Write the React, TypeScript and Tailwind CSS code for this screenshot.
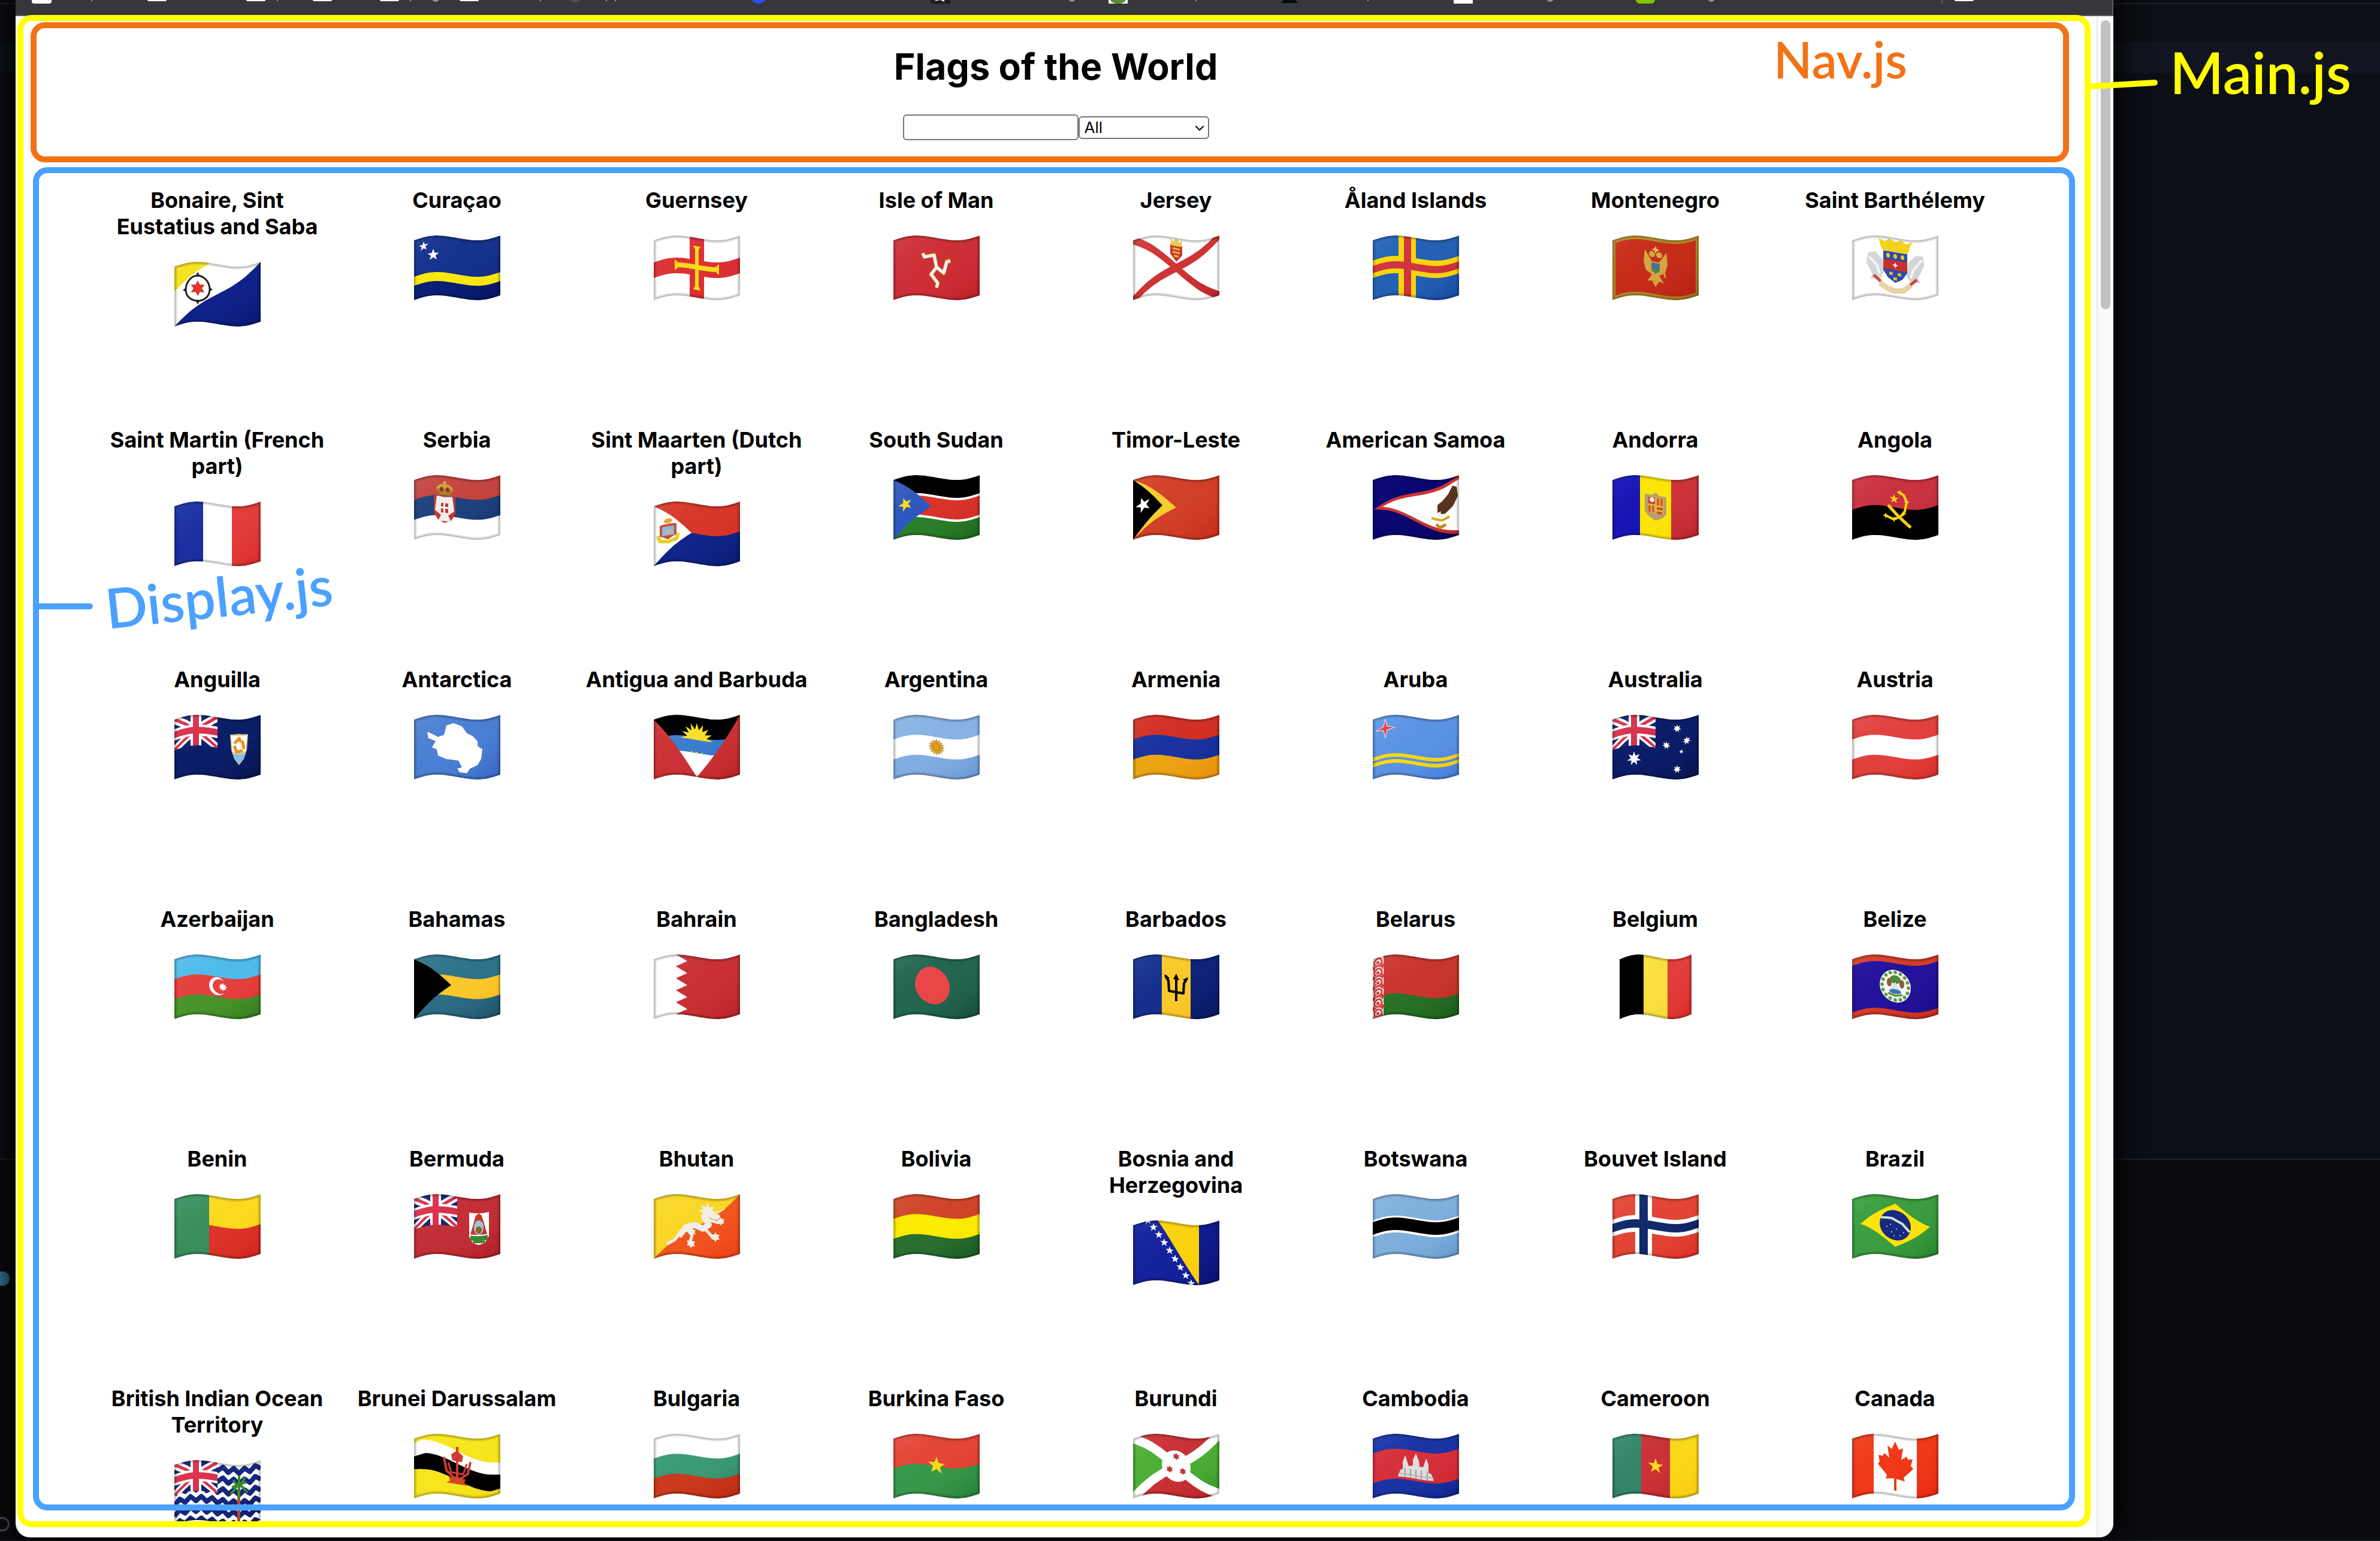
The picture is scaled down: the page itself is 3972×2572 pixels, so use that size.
import { useId } from "react";
import { ChevronDown } from "lucide-react";

/* ---------- flag drawing helpers ---------- */

type Pt = [number, number];
type Shape = { pts: Pt[]; fill: string; line?: number; closed?: boolean };

const H = 100;

// Height of the ripple at a given horizontal position (0..1).
function ripple(t: number) {
  const x = t * 144;
  if (x <= 37) return 8 - 8 * Math.sin(((Math.PI / 2) * Math.max(x, 0)) / 37);
  if (x <= 107) return 4 - 4 * Math.cos((Math.PI * (x - 37)) / 70);
  return 8 * Math.cos(((Math.PI / 2) * (Math.min(x, 144) - 107)) / 37);
}

function toPath(pts: Pt[], w: number, closed: boolean) {
  const out: string[] = [];
  const n = closed ? pts.length : pts.length - 1;
  const put = (x: number, y: number) =>
    out.push(`${x.toFixed(1)} ${(y + ripple(x / w)).toFixed(1)}`);
  put(pts[0][0], pts[0][1]);
  for (let i = 0; i < n; i++) {
    const [ax, ay] = pts[i];
    const [bx, by] = pts[(i + 1) % pts.length];
    const steps = Math.max(1, Math.ceil(Math.abs(bx - ax) / 5));
    for (let s = 1; s <= steps; s++)
      put(ax + ((bx - ax) * s) / steps, ay + ((by - ay) * s) / steps);
  }
  return "M" + out.join("L") + (closed ? "Z" : "");
}

const poly = (fill: string, ...pts: Pt[]): Shape => ({ pts, fill, closed: true });
const rect = (x: number, y: number, w: number, h: number, fill: string): Shape =>
  poly(fill, [x, y], [x + w, y], [x + w, y + h], [x, y + h]);
const line = (fill: string, width: number, ...pts: Pt[]): Shape => ({ pts, fill, line: width });
const ring = (cx: number, cy: number, rx: number, ry: number): Pt[] =>
  Array.from({ length: 32 }, (_, i) => {
    const a = (i / 32) * Math.PI * 2;
    return [cx + rx * Math.cos(a), cy + ry * Math.sin(a)] as Pt;
  });
const oval = (cx: number, cy: number, rx: number, ry: number, fill: string): Shape => ({
  pts: ring(cx, cy, rx, ry), fill, closed: true,
});
const hoop = (cx: number, cy: number, rx: number, ry: number, width: number, fill: string): Shape => ({
  pts: ring(cx, cy, rx, ry), fill, line: width, closed: true,
});
const star = (cx: number, cy: number, r: number, fill: string, n = 5, inner = 0.4, turn = 0): Shape => ({
  pts: Array.from({ length: n * 2 }, (_, i) => {
    const a = (i / (n * 2)) * Math.PI * 2 - Math.PI / 2 + turn;
    const q = i % 2 ? r * inner : r;
    return [cx + q * Math.cos(a), cy + q * Math.sin(a)] as Pt;
  }),
  fill, closed: true,
});
const across = (...c: string[]): Shape[] =>
  c.map((f, i) => rect(0, (H / c.length) * i, 144, H / c.length + (i < c.length - 1 ? 1 : 0), f));
const down = (w: number, ...c: string[]): Shape[] =>
  c.map((f, i) => rect((w / c.length) * i, 0, w / c.length + (i < c.length - 1 ? 1 : 0), H, f));
const all = (f: string) => rect(0, 0, 144, H, f);

const bars = (w: number, h: number, a: number, b: number, f: string): Shape[] => [
  poly(f, [0, 0], [a, 0], [w, h - b], [w, h], [w - a, h], [0, b]),
  poly(f, [w, 0], [w - a, 0], [0, h - b], [0, h], [a, h], [w, b]),
];
const union = (blue = "#12246e"): Shape[] => [
  rect(0, 0, 72, 51, blue),
  ...bars(72, 51, 11, 8, "#fff"),
  ...bars(72, 51, 4, 3, "#d8304a"),
  rect(27, 0, 18, 51, "#fff"),
  rect(0, 16, 72, 19, "#fff"),
  rect(31, 0, 10, 51, "#d8304a"),
  rect(0, 20, 72, 11, "#d8304a"),
];
const cross = (f: string, x: number, w: number, y: number, h: number): Shape[] => [
  rect(x, 0, w, H, f),
  rect(0, y, 144, h, f),
];

/* ---------- flags ---------- */

const flags: Record<string, Shape[]> = {
  bonaire: [
    all("#fff"),
    poly("#f5e11c", [0, 0], [60, 0], [0, 42]),
    poly("#10228a", [144, 0], [144, 100], [0, 100]),
    hoop(39, 44, 20, 21, 3, "#1d1d1b"),
    poly("#1d1d1b", [35, 24], [39, 17], [43, 24]), poly("#1d1d1b", [35, 64], [39, 71], [43, 64]),
    poly("#1d1d1b", [20, 40], [14, 44], [20, 48]), poly("#1d1d1b", [58, 40], [64, 44], [58, 48]),
    star(39, 44, 13, "#dc352c", 6, 0.55),
  ],
  curacao: [
    all("#15328c"), rect(0, 76, 144, 24, "#0b1f78"), rect(0, 61, 144, 15, "#fae80c"),
    star(16, 15, 8, "#fff"), star(32, 32, 10, "#fff"),
  ],
  guernsey: [
    all("#fff"), ...cross("#dc3237", 60, 24, 37, 26),
    poly("#f8dc17", [66, 14], [78, 14], [75, 20], [75, 80], [78, 87], [66, 87], [69, 80], [69, 20]),
    poly("#f8dc17", [35, 40], [41, 45], [103, 45], [109, 40], [109, 58], [103, 53], [41, 53], [35, 58]),
  ],
  man: [
    all("#cc3036"),
    line("#d9b520", 6, [72, 49], [68, 29], [52, 35], [49, 29]),
    line("#d9b520", 6, [72, 49], [84, 57], [89, 36], [95, 35]),
    line("#d9b520", 6, [72, 49], [63, 63], [74, 75], [72, 83]),
    line("#f1f1f1", 5, [72, 49], [68, 30], [52, 35], [49, 29]),
    line("#f1f1f1", 5, [72, 49], [84, 56], [89, 38], [95, 35]),
    line("#f1f1f1", 5, [72, 49], [63, 62], [74, 75], [72, 83]),
  ],
  jersey: [
    all("#fff"),
    poly("#cd3436", [0, 0], [10, 0], [144, 93], [144, 100], [134, 100], [0, 7]),
    poly("#cd3436", [144, 0], [134, 0], [0, 93], [0, 100], [10, 100], [144, 7]),
    poly("#c9372c", [62, 12], [82, 12], [82, 28], [72, 40], [62, 28]),
    poly("#e8c94c", [62, 3], [67, 7], [72, 1], [77, 7], [82, 3], [80, 14], [64, 14]),
    rect(66, 17, 12, 3, "#e3bd35"), rect(66, 23, 12, 3, "#e3bd35"), rect(68, 29, 8, 3, "#e3bd35"),
  ],
  aland: [all("#2461b5"), ...cross("#fbd40b", 43, 29, 34, 29), ...cross("#d03440", 52, 12, 43, 12)],
  montenegro: [
    all("#b8932e"), rect(5, 6, 134, 88, "#c52c1a"),
    poly("#d3a640", [66, 40], [54, 22], [52, 42], [56, 56], [66, 62], [58, 74], [66, 72], [72, 82], [78, 72], [86, 74], [78, 62], [88, 56], [92, 42], [90, 22], [78, 40]),
    oval(66, 28, 5, 5, "#d3a640"), oval(78, 28, 5, 5, "#d3a640"), star(72, 20, 7, "#e2bb50", 4),
    poly("#4a7191", [65, 42], [79, 42], [79, 54], [72, 60], [65, 54]), rect(66, 53, 12, 4, "#4f8a3c"),
    line("#c8a040", 3, [88, 64], [85, 48]),
  ],
  barthelemy: [
    all("#fff"),
    poly("#d3d6d9", [50, 38], [38, 26], [26, 28], [24, 44], [34, 64], [30, 72], [48, 70], [54, 58]),
    poly("#d3d6d9", [94, 38], [106, 26], [118, 28], [120, 44], [110, 64], [114, 72], [96, 70], [90, 58]),
    line("#f3f4f5", 4, [28, 34], [42, 50], [46, 64]), line("#f3f4f5", 4, [116, 34], [102, 50], [98, 64]),
    line("#cf4b3c", 5, [36, 66], [48, 76]), line("#cf4b3c", 5, [108, 66], [96, 76]),
    line("#ead5a8", 9, [46, 78], [58, 86], [72, 89], [86, 86], [98, 76]),
    poly("#2f4ba8", [52, 24], [92, 24], [92, 56], [84, 68], [72, 75], [60, 68], [52, 56]),
    rect(52, 38, 40, 16, "#c8302f"), star(72, 46, 5, "#fff", 4),
    poly("#f2d21b", [44, 4], [54, 8], [62, 3], [72, 7], [82, 3], [90, 8], [100, 4], [94, 20], [92, 24], [52, 24], [48, 18]),
    oval(60, 31, 3, 4, "#e8c92c"), oval(72, 31, 3, 4, "#e8c92c"), oval(84, 31, 3, 4, "#e8c92c"),
    rect(62, 58, 6, 5, "#d9bc38"), rect(76, 58, 6, 5, "#d9bc38"), rect(69, 66, 6, 5, "#d9bc38"),
  ],
  france: down(144, "#1b2ea0", "#fff", "#e23d3c"),
  serbia: [
    ...across("#c5443f", "#1d427d", "#fff"),
    poly("#c03a2e", [33, 34], [69, 34], [69, 62], [62, 74], [51, 79], [40, 74], [33, 62]),
    poly("#eee", [51, 36], [64, 34], [67, 58], [57, 66], [62, 76], [40, 76], [45, 66], [35, 58], [38, 34]),
    rect(45, 46, 12, 16, "#c03a2e"), rect(49, 46, 3, 16, "#fff"), rect(45, 52, 12, 3, "#fff"),
    oval(51, 22, 14, 8, "#d0a13a"), poly("#a87925", [38, 22], [64, 22], [60, 33], [42, 33]),
    oval(46, 23, 3, 4, "#8b2f2a"), oval(56, 23, 3, 4, "#8b2f2a"), oval(51, 12, 3, 3, "#d0a13a"),
  ],
  maarten: [
    ...across("#d63729", "#10258a"), poly("#fff", [0, 0], [63, 50], [0, 100]),
    line("#e9cf28", 6, [7, 52], [10, 62], [24, 66], [38, 62], [41, 52]),
    poly("#cb4a35", [10, 36], [38, 36], [38, 54], [24, 62], [10, 54]), rect(14, 40, 20, 15, "#86b8dd"),
    rect(19, 45, 10, 9, "#b9b6b2"), oval(24, 31, 7, 4, "#e6a637"),
  ],
  ssudan: [
    rect(0, 0, 144, 32, "#000"), rect(0, 30, 144, 40, "#fff"), rect(0, 34, 144, 32, "#d8342a"),
    rect(0, 70, 144, 30, "#2c7f2a"), poly("#2e57bd", [0, 0], [63, 50], [0, 100]),
    star(20, 47, 12, "#fbe011", 5, 0.4, -0.3),
  ],
  timor: [
    all("#d23f28"), poly("#f8cb2e", [0, 0], [72, 50], [0, 100]), poly("#000", [0, 0], [49, 50], [0, 100]),
    star(17, 47, 13, "#fff", 5, 0.4, -0.3),
  ],
  samoa: [
    all("#09066f"), poly("#cd3335", [2, 50], [144, 0], [144, 98]),
    poly("#fff", [16, 50], [144, 6], [144, 92]),
    poly("#5b3520", [133, 14], [140, 18], [142, 34], [134, 48], [120, 58], [108, 56], [108, 42], [116, 36], [126, 26]),
    poly("#f1efe6", [104, 56], [114, 53], [112, 62]),
    line("#dfaa28", 4, [98, 64], [116, 68], [128, 64]), line("#c99426", 5, [106, 74], [112, 80], [122, 76]),
  ],
  andorra: [
    rect(0, 0, 48, 100, "#1615b4"), rect(46, 0, 54, 100, "#fce508"), rect(98, 0, 46, 100, "#cd3439"),
    poly("#b6a06c", [54, 30], [66, 30], [72, 25], [78, 30], [90, 30], [90, 58], [84, 66], [72, 72], [60, 66], [54, 58]),
    rect(60, 34, 25, 26, "#e0b53c"),
    rect(60, 34, 11, 11, "#cb3a31"), rect(74, 34, 4, 12, "#d05c2d"), rect(80, 34, 4, 12, "#d05c2d"), rect(60, 48, 4, 11, "#d05c2d"),
    rect(66, 48, 4, 11, "#d05c2d"), rect(74, 49, 10, 4, "#c24b30"), rect(74, 56, 9, 4, "#c24b30"), oval(66, 38, 4, 4, "#f4f0e4"),
  ],
  angola: [
    ...across("#ca3141", "#000"),
    line("#fad40f", 4, [76, 23], [86, 27], [91, 38], [88, 54], [80, 65], [68, 70], [54, 65]),
    star(80, 24, 5, "#fad40f", 4), star(91, 38, 5, "#fad40f", 4), star(86, 58, 5, "#fad40f", 4), star(70, 70, 5, "#fad40f", 4), star(56, 66, 5, "#fad40f", 4),
    line("#fad40f", 5, [60, 48], [74, 61], [98, 80]), star(70, 36, 8, "#fad40f"),
  ],
  anguilla: [
    all("#0b1e68"), ...union(),
    poly("#d9d29b", [93, 26], [108, 24], [123, 26], [121, 52], [116, 66], [108, 76], [100, 66], [95, 52]),
    poly("#fff", [95, 28], [108, 27], [121, 28], [119, 54], [97, 54]), poly("#8cc4ee", [97, 58], [119, 58], [114, 67], [108, 73], [102, 67]),
    line("#f09422", 5, [104, 32], [114, 38], [116, 50]), line("#f09422", 5, [100, 44], [104, 54], [114, 52]), line("#f09422", 5, [110, 30], [100, 40]),
  ],
  antarctica: [
    all("#4b7fd3"),
    poly("#fff", [22, 27], [40, 37], [50, 33], [54, 17], [66, 11], [80, 14], [88, 24], [98, 28], [106, 36], [106, 44], [114, 50], [112, 66], [106, 76], [94, 82], [88, 91], [76, 91], [72, 86], [80, 82], [74, 72], [54, 73], [40, 68], [38, 58], [30, 54], [36, 44], [24, 38]),
  ],
  antigua: [
    rect(0, 0, 144, 38, "#000"), rect(0, 34, 144, 28, "#3b7ccd"), rect(0, 60, 144, 40, "#fff"),
    star(72, 37, 27, "#fbdf28", 16, 0.6), rect(28, 38, 90, 20, "#3b7ccd"),
    poly("#cb3235", [0, 0], [72, 100], [0, 100]), poly("#cb3235", [144, 0], [72, 100], [144, 100]),
  ],
  argentina: [...across("#87b2e3", "#fff", "#82ade0"), star(72, 50, 14, "#c79c52", 16, 0.7), oval(72, 50, 8, 9, "#dfa21c"), hoop(72, 50, 5, 6, 1, "#a9711d")],
  armenia: across("#d22f25", "#1a339f", "#eca413"),
  aruba: [
    all("#5b93e3"), rect(0, 64, 144, 6, "#f8d714"), rect(0, 74, 144, 6, "#f8d714"),
    star(21, 21, 17, "#fff", 4, 0.3), star(21, 21, 14, "#e2414b", 4, 0.28),
  ],
  australia: [
    all("#0b1d68"), ...union(), star(36, 73, 12, "#fff", 7, 0.45), star(108, 15, 7, "#fff", 7, 0.45), star(90, 44, 7, "#fff", 7, 0.45),
    star(124, 37, 7, "#fff", 7, 0.45), star(115, 54, 4, "#fff"), star(108, 83, 7, "#fff", 7, 0.45),
  ],
  austria: across("#e2413f", "#fff", "#e2413b"),
  azerbaijan: [
    ...across("#4ebbe9", "#e5403d", "#4a952b"), oval(72, 49, 14, 15, "#fff"), oval(76, 49, 12, 12, "#e5403d"), star(81, 49, 7, "#fff", 8, 0.6),
  ],
  bahamas: [...across("#2f7389", "#fbc82b", "#2d6c84"), poly("#000", [0, 0], [62, 49], [0, 100])],
  bahrain: [
    all("#fff"),
    poly("#c93136", [144, 0], [144, 100], [37, 100], [56, 90], [37, 80], [56, 70], [37, 60], [56, 50], [37, 40], [56, 30], [37, 20], [56, 10], [37, 0]),
  ],
  bangladesh: [all("#236650"), oval(65, 49, 29, 31, "#e9464a")],
  barbados: [
    ...down(144, "#15308c", "#fac92b", "#0e2278"),
    line("#000", 4, [72, 32], [72, 74]), poly("#000", [67, 38], [72, 28], [77, 38]),
    line("#000", 4, [54, 34], [59, 42], [60, 59], [84, 59], [85, 42], [90, 33]),
    poly("#000", [52, 32], [61, 37], [55, 41]), poly("#000", [92, 31], [83, 36], [89, 40]),
  ],
  belarus: [
    rect(0, 0, 144, 66, "#cb352f"), rect(0, 65, 144, 35, "#297227"), rect(0, 0, 18, 100, "#fff"),
    ...[0, 1, 2, 3, 4, 5].flatMap((i) => [
      hoop(9, 8 + i * 17, 6, 6, 3, "#cf3d3a"), rect(6, 6 + i * 17, 5, 5, "#cf3d3a"),
      star(2, 16 + i * 17, 6, "#cf3d3a", 4), star(16, 16 + i * 17, 6, "#cf3d3a", 4),
    ]),
  ],
  belgium: [rect(0, 0, 41, 100, "#000"), rect(40, 0, 41, 100, "#f9e03f"), rect(80, 0, 40, 100, "#e23e3b")],
  belize: [
    all("#23129c"), rect(0, 0, 144, 11, "#d43c27"), rect(0, 89, 144, 11, "#d43c27"),
    oval(72, 49, 26, 27, "#f4f6f0"),
    ...ring(72, 49, 22, 23).filter((_, i) => i % 2 === 0).map(([x, y]) => oval(x, y, 3, 3, "#5d9a45")),
    oval(72, 38, 9, 7, "#4f8a37"),
    oval(62, 44, 4, 7, "#8d5a3a"), oval(83, 44, 4, 7, "#8d5a3a"), poly("#d9e2ea", [72, 42], [82, 56], [62, 56]),
    oval(72, 58, 10, 4, "#3c79b4"), line("#5b8a2e", 3, [60, 62], [72, 65], [84, 62]),
  ],
  benin: [rect(56, 0, 88, 51, "#fada1e"), rect(56, 50, 88, 50, "#dc352c"), rect(0, 0, 58, 100, "#388f5c")],
  bermuda: [
    all("#c22f37"), ...union("#15246e"),
    poly("#fff", [92, 24], [125, 24], [125, 64], [118, 74], [108, 77], [98, 74], [92, 64]), rect(94, 62, 29, 8, "#3f8d35"),
    poly("#c9382f", [103, 28], [108, 24], [113, 28], [118, 46], [122, 60], [94, 60], [98, 46]),
    oval(108, 48, 8, 12, "#9cc6d8"), oval(108, 52, 5, 6, "#8e6528"), rect(98, 70, 20, 4, "#3f8d35"),
  ],
  bhutan: [
    all("#f9d726"), poly("#f1561f", [144, 0], [144, 100], [0, 100]),
    line("#f0eee8", 5, [22, 82], [34, 77], [44, 66]),
    line("#f0eee8", 10, [42, 70], [54, 54], [68, 48], [82, 52], [92, 44], [84, 32], [92, 24]),
    line("#f0eee8", 5, [54, 56], [64, 66], [60, 80]), line("#f0eee8", 5, [86, 52], [98, 64], [104, 62]), line("#f0eee8", 5, [92, 36], [110, 40]),
    star(62, 80, 8, "#f0eee8", 6, 0.6), star(103, 64, 8, "#f0eee8", 6, 0.6), star(112, 38, 7, "#f0eee8", 6, 0.6), star(90, 23, 15, "#f0eee8", 8, 0.55),
    oval(103, 30, 8, 5, "#f0eee8"), line("#f0eee8", 2, [100, 24], [118, 18]), star(64, 60, 7, "#f0eee8", 6, 0.6),
  ],
  bolivia: across("#cf4529", "#fbea03", "#297030"),
  bosnia: [
    all("#14229c"), rect(109, 0, 35, 100, "#101b8c"), poly("#fbd20d", [40, -2], [110, -2], [110, 100]),
    ...Array.from({ length: 9 }, (_, i) => star(25 + i * 9, -1 + i * 12.3, 7, "#fff")),
  ],
  botswana: [all("#7fafdb"), rect(0, 36, 144, 28, "#fff"), rect(0, 39, 144, 21, "#000")],
  bouvet: [all("#e34436"), ...cross("#fff", 38, 28, 35, 28), ...cross("#12296c", 45, 14, 42, 14)],
  brazil: [
    all("#3b9c40"), poly("#fde306", [14, 46], [72, 12], [130, 50], [72, 84]), oval(72, 48, 26, 25, "#172a80"),
    line("#cfe5d4", 4, [48, 38], [66, 37], [84, 44], [96, 56]),
    ...[[58, 52], [66, 60], [74, 54], [80, 64], [64, 48], [86, 58], [70, 66]].map(([x, y]) => oval(x, y, 1, 1, "#dbe4f3")),
  ],
  biot: [
    all("#fff"),
    ...[0, 1, 2, 3, 4, 5].map((i) =>
      line("#14297c", 8, ...Array.from({ length: 17 }, (_, k): Pt => [k * 9, 10 + i * 18 + (k % 2 ? -4 : 4)]))),
    ...union("#16256e"), rect(105, 40, 5, 60, "#b9532e"), oval(108, 70, 6, 5, "#cf4a2a"),
    line("#3b8a2f", 4, [94, 50], [108, 30], [122, 48]), line("#3b8a2f", 4, [96, 38], [108, 32], [120, 30]),
    line("#3b8a2f", 4, [108, 18], [108, 56]), line("#3b8a2f", 4, [98, 26], [108, 38], [118, 22]),
  ],
  brunei: [
    all("#f7e51d"), poly("#fff", [0, 8], [14, 6], [144, 48], [144, 72], [0, 32]), poly("#000", [0, 30], [20, 30], [144, 68], [144, 91], [128, 91], [0, 51]),
    line("#d13b33", 4, [72, 18], [72, 76]), poly("#d13b33", [62, 32], [72, 24], [82, 32], [80, 42], [64, 42]),
    line("#d13b33", 4, [50, 38], [54, 60], [66, 70], [78, 70], [90, 60], [94, 40]), line("#d13b33", 3, [57, 46], [62, 62], [82, 62], [88, 44]),
    poly("#d04a22", [58, 70], [86, 70], [84, 76], [90, 80], [54, 80], [60, 76]),
  ],
  bulgaria: across("#fff", "#3c9a75", "#cb3a1d"),
  burkina: [...across("#e34537", "#38984a"), star(72, 49, 15, "#fbd91d")],
  burundi: [
    all("#c93135"), poly("#4cae35", [0, 0], [72, 50], [0, 100]), poly("#4cae35", [144, 0], [72, 50], [144, 100]),
    line("#fff", 15, [-6, -4], [150, 104]), line("#fff", 15, [-6, 104], [150, -4]), oval(72, 50, 24, 26, "#fff"),
    star(72, 34, 6, "#b93a34", 6, 0.6), star(61, 57, 6, "#b93a34", 6, 0.6), star(83, 57, 6, "#b93a34", 6, 0.6),
  ],
  cambodia: [
    all("#1a33a5"), rect(0, 25, 144, 50, "#d6303a"),
    poly("#dedede", [42, 71], [46, 60], [50, 58], [50, 46], [54, 35], [58, 46], [60, 52], [67, 50], [67, 40], [72, 29], [77, 40], [78, 50], [84, 50], [86, 44], [89, 34], [93, 44], [93, 58], [98, 60], [102, 71]),
    ...[53, 62, 71, 80, 90].map((x) => rect(x, 56, 2, 14, "#9c9c9c")), rect(43, 65, 58, 2, "#b4b4b4"),
  ],
  cameroon: [...down(144, "#338468", "#ca3237", "#fad81a"), star(72, 50, 13, "#fbd91d")],
  canada: [
    all("#fff"), rect(0, 0, 36, 100, "#ef3919"), rect(108, 0, 36, 100, "#ef3919"),
    poly("#ef3919", [72, 9], [78, 22], [85, 18], [82, 38], [91, 31], [93, 36], [101, 35], [98, 46], [102, 51], [86, 67], [88, 73], [74, 71], [74, 91], [70, 91], [70, 71], [56, 73], [58, 67], [43, 50], [46, 46], [44, 35], [51, 36], [54, 31], [62, 38], [59, 18], [66, 22]),
  ],
};

const countries: [string, string][] = [
  ["Bonaire, Sint Eustatius and Saba", "bonaire"], ["Curaçao", "curacao"], ["Guernsey", "guernsey"], ["Isle of Man", "man"],
  ["Jersey", "jersey"], ["Åland Islands", "aland"], ["Montenegro", "montenegro"], ["Saint Barthélemy", "barthelemy"],
  ["Saint Martin (French part)", "france"], ["Serbia", "serbia"], ["Sint Maarten (Dutch part)", "maarten"], ["South Sudan", "ssudan"],
  ["Timor-Leste", "timor"], ["American Samoa", "samoa"], ["Andorra", "andorra"], ["Angola", "angola"],
  ["Anguilla", "anguilla"], ["Antarctica", "antarctica"], ["Antigua and Barbuda", "antigua"], ["Argentina", "argentina"],
  ["Armenia", "armenia"], ["Aruba", "aruba"], ["Australia", "australia"], ["Austria", "austria"],
  ["Azerbaijan", "azerbaijan"], ["Bahamas", "bahamas"], ["Bahrain", "bahrain"], ["Bangladesh", "bangladesh"],
  ["Barbados", "barbados"], ["Belarus", "belarus"], ["Belgium", "belgium"], ["Belize", "belize"],
  ["Benin", "benin"], ["Bermuda", "bermuda"], ["Bhutan", "bhutan"], ["Bolivia", "bolivia"],
  ["Bosnia and Herzegovina", "bosnia"], ["Botswana", "botswana"], ["Bouvet Island", "bouvet"], ["Brazil", "brazil"],
  ["British Indian Ocean Territory", "biot"], ["Brunei Darussalam", "brunei"], ["Bulgaria", "bulgaria"], ["Burkina Faso", "burkina"],
  ["Burundi", "burundi"], ["Cambodia", "cambodia"], ["Cameroon", "cameroon"], ["Canada", "canada"],
];

function Flag({ code }: { code: string }) {
  const id = useId();
  const w = code === "belgium" ? 120 : 144;
  const outline = toPath([[0, 0], [w, 0], [w, H], [0, H]], w, true);
  return (
    <svg width={w} height={108} viewBox={`0 0 ${w} 108`} className="isolate block" aria-hidden="true">
      <defs>
        <clipPath id={`${id}c`}><path d={outline} /></clipPath>
        <linearGradient id={`${id}g`} x1="0" y1="0" x2="1" y2="1">
          <stop offset="0" stopColor="#fff" stopOpacity="0.3" />
          <stop offset="0.45" stopColor="#888" stopOpacity="0" />
          <stop offset="1" stopColor="#000" stopOpacity="0.45" />
        </linearGradient>
        <filter id={`${id}b`} x="-10%" y="-10%" width="120%" height="120%"><feGaussianBlur stdDeviation="1" /></filter>
      </defs>
      <g clipPath={`url(#${id}c)`}>
        {flags[code].map((s, i) =>
          s.line ? (
            <path key={i} d={toPath(s.pts, w, !!s.closed)} fill="none" stroke={s.fill} strokeWidth={s.line} strokeLinejoin="round" />
          ) : (
            <path key={i} d={toPath(s.pts, w, true)} fill={s.fill} />
          ),
        )}
        <path d={outline} fill={`url(#${id}g)`} className="mix-blend-soft-light" />
        <path d={outline} fill="none" stroke="#000" strokeOpacity="0.24" strokeWidth="7" filter={`url(#${id}b)`} />
      </g>
    </svg>
  );
}

/* ---------- page ---------- */

function BookmarksBar() {
  return (
    <div className="h-[27px] shrink-0 overflow-hidden border-r-2 border-b-2 border-[#5b5c5f] bg-[#36373b]">
      <svg width="3400" height="8" viewBox="26 0 3400 8" className="block" aria-hidden="true">
        <path d="M53 0H86V4Q85 6 82 6H57Q54 6 53 4Z" fill="#fff" />
        {[246, 411, 522, 634, 767, 3262].map((x) => (
          <rect key={x} x={x} y="-4" width="32" height="6" rx="2" fill="#fff" />
        ))}
        {[152, 462, 684, 901, 1011, 1026, 1995, 2282].map((x) => (
          <rect key={x} x={x} y="0" width="2" height="2" fill="#9a9b9e" />
        ))}
        {[727, 1789, 2587, 2856].map((x) => (
          <ellipse key={x} cx={x} cy="0" rx="5" ry="3" fill="#8e8f93" />
        ))}
        <path d="M950 0H970L960 4Z" fill="#55554f" />
        <circle cx="1266" cy="-7" r="13" fill="#2b50f0" />
        <rect x="1553" y="-6" width="33" height="12" rx="3" fill="#1d1d1f" />
        <path d="M1560 2L1569 0L1576 3V0H1562Z" fill="#fff" />
        <rect x="1850" y="-4" width="32" height="10" fill="#fff" />
        <path d="M1853 0H1879Q1876 6 1866 6Q1856 6 1853 0Z" fill="#5f8a35" />
        <path d="M2143 0H2161L2167 5H2137Z" fill="#06080f" />
        <rect x="2426" y="-4" width="32" height="10" fill="#fff" />
        <path d="M2730 0H2762Q2761 6 2754 6H2738Q2731 6 2730 0Z" fill="#83c400" />
        <rect x="3240" y="0" width="2" height="6" fill="#66676b" />
      </svg>
    </div>
  );
}

function Nav() {
  return (
    <nav className="relative mt-0.5 mr-[26px] ml-3 flex h-[234px] shrink-0 flex-col items-center rounded-3xl border-10 border-[#f27317] pt-5 pl-5">
      <h1 className="text-[61px] leading-[88px] font-bold">Flags of the World</h1>
      <div className="mt-9 flex items-center">
        <input
          type="text"
          aria-label="Search countries"
          className="h-[43px] w-[293px] rounded-md border-2 border-[#767676] bg-white px-2 text-[26px]"
        />
        <div className="relative">
          <select
            aria-label="Region"
            className="block h-[38px] w-[218px] appearance-none rounded-md border-2 border-[#767676] bg-white px-2 text-[26px] leading-[34px]"
          >
            <option>All</option>
          </select>
          <ChevronDown className="pointer-events-none absolute top-2 right-1 size-6" strokeWidth={2} />
        </div>
      </div>
      <span className="absolute top-2 right-[260px] text-[84px] leading-[88px] font-semibold text-[#f27317] [font-family:'Lato',sans-serif]">
        Nav.js
      </span>
    </nav>
  );
}

function Display() {
  return (
    <section className="relative mx-4 mt-2 mb-[18px] min-h-0 flex-1 pt-[33px]">
      <ul className="grid auto-rows-[400px] grid-cols-[repeat(auto-fill,400px)] justify-center pl-[7px]">
        {countries.map(([name, code]) => (
          <li key={code} className="flex flex-col items-center gap-[37px] px-3 text-center">
            <h3 className="text-[36px] leading-[44px] font-bold">{name}</h3>
            <Flag code={code} />
          </li>
        ))}
      </ul>
      <div className="pointer-events-none absolute inset-0 rounded-3xl border-10 border-[#4aa1ff]" />
      <div className="absolute top-[728px] left-0 h-2.5 w-[100px] rounded-full bg-[#4aa1ff]" />
      <span className="absolute top-[666px] left-[120px] -rotate-6 text-[92px] leading-[100px] font-semibold text-[#4aa1ff] [font-family:'Lato',sans-serif]">
        Display.js
      </span>
    </section>
  );
}

export default function App() {
  return (
    <div className="relative grid h-screen w-full overflow-hidden bg-[#0d1117] text-black [font-family:'Inter',sans-serif]">
      <div className="flex flex-col [grid-area:1/1]">
        <div className="h-[7px] border-b-2 border-[#1f232b] bg-[#0c0d12]" />
        <div className="h-16 bg-[#0c0f15]" />
        <div className="h-[51px] bg-[#121520]" />
        <div className="h-[1812px] bg-[#0c0f16]" />
        <div className="flex-1 border-t-2 border-b border-[#20242b] bg-[#0b0c10]" />
      </div>
      <div className="absolute top-[2122px] -left-2 size-6 rounded-full bg-[#3b7ea6]" />
      <div className="absolute top-[2532px] -left-2 size-6 rounded-full border-3 border-[#55585c]" />

      <div className="relative mr-[445px] mb-1.5 ml-[26px] flex min-h-0 flex-col overflow-hidden rounded-b-3xl bg-white shadow-[0_0_50px_10px_#000] [grid-area:1/1]">
        <BookmarksBar />
        <div className="flex min-h-0 flex-1">
          <main className="-mt-0.5 mr-2.5 mb-[17px] ml-[3px] flex min-h-0 flex-1 flex-col overflow-hidden rounded-3xl border-10 border-[#ffff00]">
            <Nav />
            <Display />
          </main>
          <div className="flex w-7 justify-center border-l-2 border-[#e8e8e8] bg-[#fafafa] pt-[7px]">
            <div className="h-[482px] w-4 rounded-full bg-[#c1c1c1]" />
          </div>
        </div>
      </div>

      <svg width="116" height="24" viewBox="0 0 116 24" className="absolute top-[129px] right-[368px]" aria-hidden="true">
        <path d="M4 15L108 9" stroke="#ffff00" strokeWidth="10" strokeLinecap="round" />
      </svg>
      <span className="absolute top-[64px] right-[48px] text-[96px] leading-[112px] font-semibold text-[#ffff00] [font-family:'Lato',sans-serif]">
        Main.js
      </span>
    </div>
  );
}
